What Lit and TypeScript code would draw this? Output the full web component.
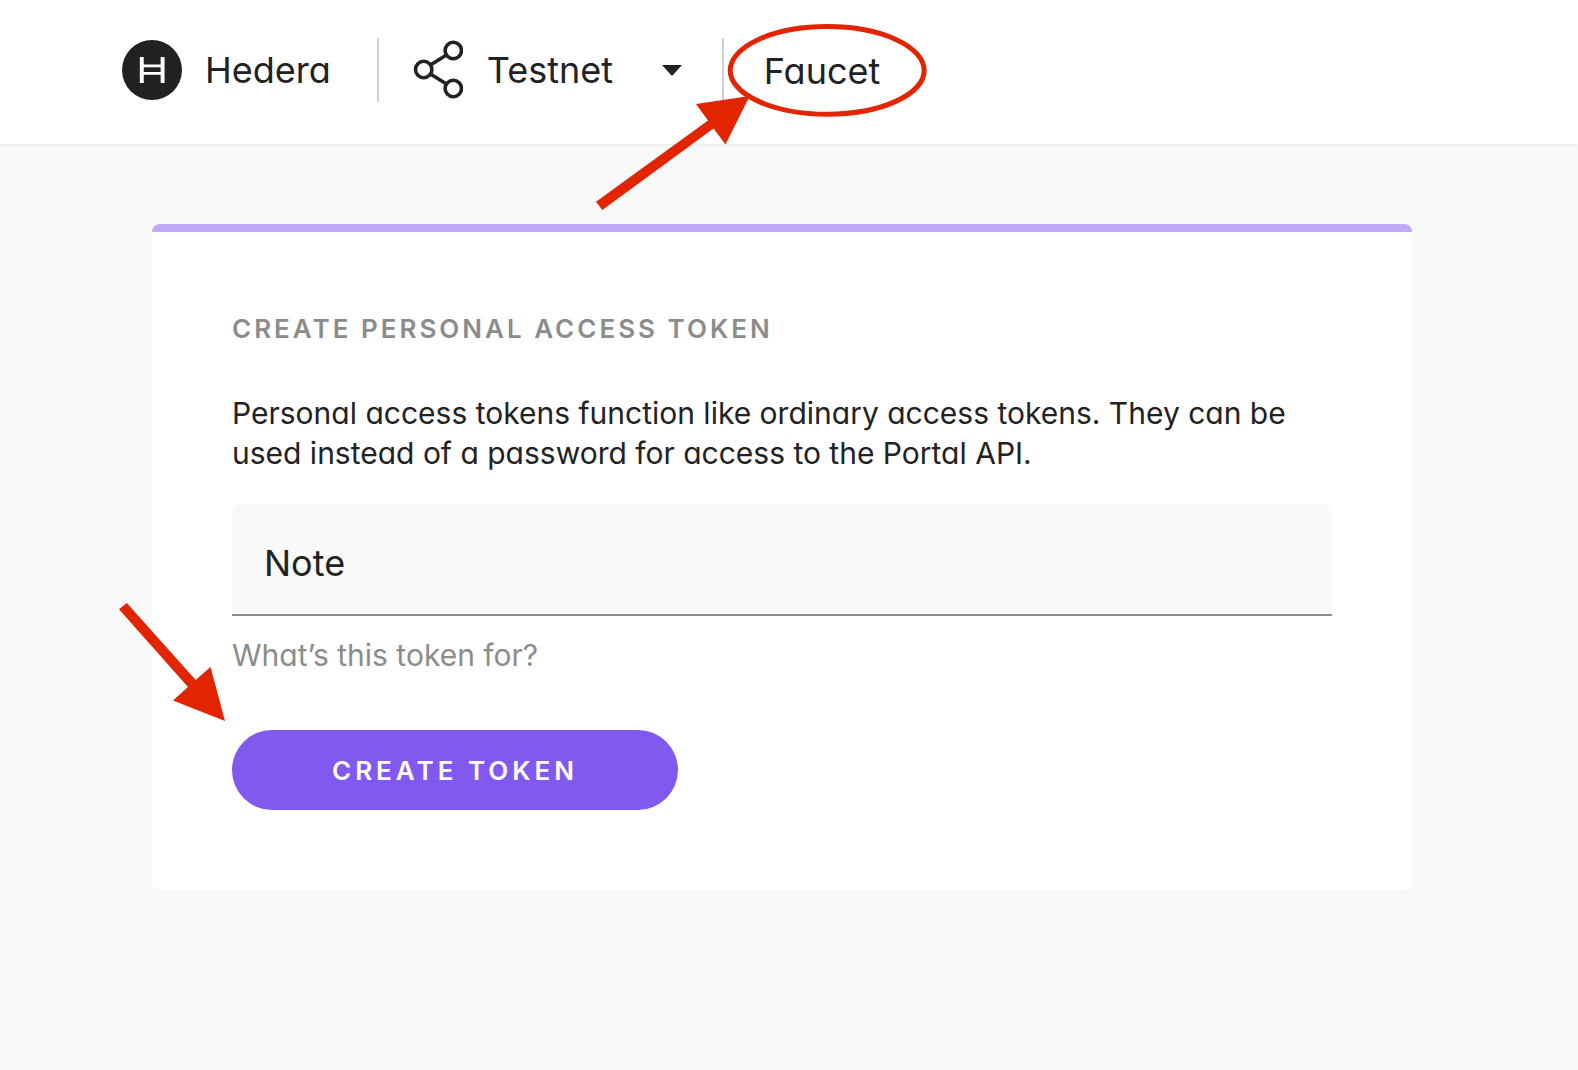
import { LitElement, html, css } from "lit";
import { customElement, state } from "lit/decorators.js";

@customElement("portal-header")
class PortalHeader extends LitElement {
  static styles = css`
    :host {
      display: block;
    }
    .bar {
      display: flex;
      align-items: center;
      height: 144px;
      padding: 0 122px;
      box-sizing: border-box;
      background: #ffffff;
      box-shadow: 0 1px 4px rgba(0, 0, 0, 0.08);
      color: #222222;
      font-size: 36px;
      line-height: 40px;
    }
    .brand,
    .network {
      display: flex;
      align-items: center;
      height: 64px;
      border-right: 2px solid #d0d0d0;
      margin-bottom: 4px;
    }
    .brand {
      gap: 23px;
      padding-right: 46px;
      color: inherit;
      text-decoration: none;
    }
    .network {
      gap: 20px;
      padding: 0 40px 0 34px;
    }
    .mark,
    .share,
    .caret {
      display: block;
      flex: none;
    }
    .picker {
      display: grid;
      align-items: center;
    }
    .select {
      grid-area: 1 / 1;
      appearance: none;
      border: 0;
      margin: 0;
      padding: 0 68px 0 4px;
      background: transparent;
      color: inherit;
      font: inherit;
    }
    .caret {
      grid-area: 1 / 1;
      justify-self: end;
      pointer-events: none;
    }
    .link {
      margin: 0 0 2px 40px;
      color: inherit;
      text-decoration: none;
    }
  `;

  render() {
    return html`
      <header class="bar">
        <a class="brand" href="#home">
          <svg class="mark" width="60" height="60" viewBox="0 0 60 60" aria-hidden="true">
            <circle cx="30" cy="30" r="30" fill="#222222" />
            <g fill="none" stroke="#ffffff">
              <path d="M19.8 17V43M40.6 17V43" stroke-width="3.9" />
              <path d="M19.8 25.9H40.6M19.8 33.3H40.6" stroke-width="2.8" />
            </g>
          </svg>
          <span>Hedera</span>
        </a>
        <div class="network">
          <svg class="share" width="50" height="60" viewBox="0 0 50 60" fill="none" stroke="#222222" aria-hidden="true">
            <g stroke-width="3.6">
              <circle cx="10.7" cy="29.5" r="8.2" />
              <circle cx="40.3" cy="10.5" r="8.2" />
              <circle cx="40.3" cy="48.5" r="8.2" />
              <path d="M17.5 25 33 15.2M17.5 34 33 43.8" />
            </g>
          </svg>
          <div class="picker">
            <select class="select" aria-label="Network">
              <option>Testnet</option>
            </select>
            <svg class="caret" width="20" height="11" viewBox="0 0 20 11" aria-hidden="true">
              <path d="M0 0H20L10 11Z" fill="#222222" />
            </svg>
          </div>
        </div>
        <a class="link" href="#faucet">Faucet</a>
      </header>
    `;
  }
}

@customElement("token-card")
class TokenCard extends LitElement {
  static styles = css`
    :host {
      display: block;
    }
    .card {
      display: flex;
      flex-direction: column;
      align-items: stretch;
      padding: 81px 80px 80px;
      background: #ffffff;
      border-top: 8px solid #c0aaf7;
      border-radius: 8px;
      color: #222222;
      font-size: 30px;
      line-height: 40px;
    }
    .title {
      margin: 0 0 48px;
      color: #8c8c8c;
      font-size: 26px;
      line-height: 32px;
      font-weight: 600;
      letter-spacing: 3px;
    }
    .intro {
      margin: 0 0 31px;
    }
    .field {
      display: grid;
      height: 112px;
      box-sizing: border-box;
      border-bottom: 2px solid #8c8c8c;
      border-radius: 8px 8px 0 0;
      background: #f9f9f9;
    }
    .label,
    .input {
      grid-area: 1 / 1;
      padding: 8px 32px 0;
      font-size: 36px;
    }
    .label {
      align-self: center;
      pointer-events: none;
      z-index: 1;
    }
    .label.filled {
      visibility: hidden;
    }
    .input {
      min-width: 0;
      border: 0;
      background: transparent;
      color: inherit;
      font-family: inherit;
      outline: none;
    }
    .hint {
      margin: 19px 0 55px;
      color: #8c8c8c;
    }
    .submit {
      align-self: flex-start;
      height: 80px;
      padding: 0 100px;
      border: 0;
      border-radius: 40px;
      background: #8259ef;
      color: #ffffff;
      font-family: inherit;
      font-size: 26px;
      font-weight: 600;
      letter-spacing: 4px;
    }
  `;

  @state() private note = "";

  private onInput(event: Event) {
    this.note = (event.target as HTMLInputElement).value;
  }

  render() {
    return html`
      <section class="card">
        <h1 class="title">CREATE PERSONAL ACCESS TOKEN</h1>
        <p class="intro">
          Personal access tokens function like ordinary access tokens. They can be used instead of a
          password for access to the Portal API.
        </p>
        <div class="field">
          <label class="label ${this.note ? "filled" : ""}" for="note">Note</label>
          <input
            class="input"
            id="note"
            type="text"
            aria-describedby="hint"
            .value=${this.note}
            @input=${this.onInput}
          />
        </div>
        <p class="hint" id="hint">What’s this token for?</p>
        <button class="submit" type="button">CREATE TOKEN</button>
      </section>
    `;
  }
}

@customElement("app-root")
class AppRoot extends LitElement {
  static styles = css`
    :host {
      display: block;
      position: relative;
      min-height: 100vh;
      background: #f9f9f9;
      font-family: Inter, "Liberation Sans", sans-serif;
      font-feature-settings: "cv11";
    }
    .main {
      padding: 80px 166px 80px 152px;
    }
    .marks {
      position: absolute;
      top: 0;
      left: 0;
      pointer-events: none;
    }
  `;

  render() {
    return html`
      <portal-header></portal-header>
      <main class="main">
        <token-card></token-card>
      </main>
      <svg class="marks" width="940" height="740" viewBox="0 0 940 740" fill="#e32400" aria-hidden="true">
        <ellipse cx="827.2" cy="70.4" rx="97" ry="43.8" fill="none" stroke="#e32400" stroke-width="5" />
        <path d="M596 201.7 708 120.5 696 104 749.7 96 725.5 144.5 713.5 128.5 602.3 210Z" />
        <path d="M119 609.3 126.8 603 195.7 680 210.5 667 225 721 173 700.5 188 687Z" />
      </svg>
    `;
  }
}
